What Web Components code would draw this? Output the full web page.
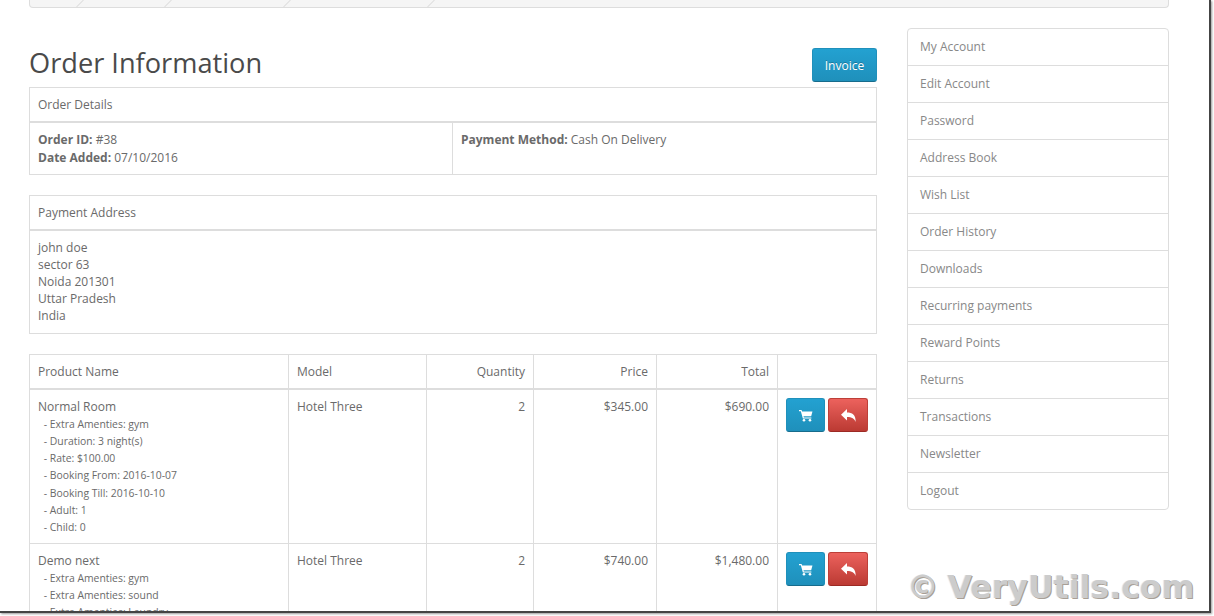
<!DOCTYPE html>
<html>
<head>
<meta charset="utf-8">
<title>Order Information</title>
<style>
html, body { margin: 0; background: #fff; }
body { font-family: "Open Sans", "Liberation Sans", sans-serif; font-size: 12px; color: #6a6a6a; }
</style>
</head>
<body>
<page-frame>
  <crumb-bar></crumb-bar>
  <div slot="main">
    <order-title>Order Information<action-button slot="action">Invoice</action-button></order-title>
    <info-panel heading="Order Details" columns="2">
      <div><b>Order ID:</b> #38<br><b>Date Added:</b> 07/10/2016</div>
      <div class="next"><b>Payment Method:</b> Cash On Delivery</div>
    </info-panel>
    <info-panel heading="Payment Address">
      <div>john doe<br>sector 63<br>Noida 201301<br>Uttar Pradesh<br>India</div>
    </info-panel>
    <order-table></order-table>
  </div>
  <account-menu slot="side"></account-menu>
  <water-mark slot="overlay">© VeryUtils.com</water-mark>
</page-frame>

<script>
class PageFrame extends HTMLElement {
  constructor() {
    super();
    this.attachShadow({ mode: 'open' }).innerHTML = `
<style>
:host { display: block; width: 1214px; height: 616px; overflow: hidden; position: relative; background: #fff; }
.screen { width: 1209px; height: 611px; overflow: hidden; position: relative; box-sizing: content-box;
  border-right: 2px solid #444; border-bottom: 2px solid #444; box-shadow: 1px 1px 2px #999; background: #fff; }
.wrap { width: 1140px; margin-left: 29px; }
.cols { display: flex; justify-content: space-between; padding-top: 20px; }
.main { width: 848px; }
.side { width: 262px; }
</style>
<div class="screen">
  <div class="wrap">
    <slot></slot>
    <div class="cols">
      <div class="main"><slot name="main"></slot></div>
      <div class="side"><slot name="side"></slot></div>
    </div>
  </div>
  <slot name="overlay"></slot>
</div>`;
  }
}

class CrumbBar extends HTMLElement {
  constructor() {
    super();
    this.attachShadow({ mode: 'open' }).innerHTML = `
<style>
:host { display: block; height: 8px; box-sizing: border-box; overflow: hidden; background: #f5f5f5;
  border: 1px solid #ddd; border-top: 0; border-radius: 0 0 4px 4px; }
.row { display: flex; height: 7px; }
i { display: block; height: 7px; position: relative; overflow: hidden; flex: none; }
i::after { content: ""; position: absolute; right: -1px; top: 3px; width: 10px; height: 1px; background: #ddd;
  transform: rotate(-45deg); transform-origin: center; }
</style>
<div class="row"><i style="width:54px"></i><i style="width:88px"></i><i style="width:119px"></i><i style="width:144px"></i></div>`;
  }
}

class OrderTitle extends HTMLElement {
  constructor() {
    super();
    this.attachShadow({ mode: 'open' }).innerHTML = `
<style>
:host { display: flex; justify-content: space-between; align-items: flex-end; height: 59px;
  font-size: 27.2px; line-height: 33px; color: #4a4a4a; }
.t { padding-bottom: 8px; }
.a { padding-bottom: 5px; }
</style>
<span class="t"><slot></slot></span><span class="a"><slot name="action"></slot></span>`;
  }
}

class ActionButton extends HTMLElement {
  constructor() {
    super();
    this.attachShadow({ mode: 'open' }).innerHTML = `
<style>
:host { display: inline-flex; align-items: center; justify-content: center; box-sizing: border-box;
  width: var(--w, 65px); height: 34px; padding-top: 1px; border-radius: 3px; font-size: 12px; line-height: 20px; color: #fff;
  background: linear-gradient(to bottom, #23a1d1, #1f90bb); border: 1px solid #1f90bb; border-bottom-color: #176c8c;
  text-shadow: 0 -1px 0 rgba(0,0,0,.25); }
:host([tone="red"]) { background: linear-gradient(to bottom, #ec625d, #bb3a33); border-color: #bd3f38; border-bottom-color: #9c2a24; }
</style>
<slot></slot>`;
  }
}

class InfoPanel extends HTMLElement {
  constructor() {
    super();
    this.attachShadow({ mode: 'open' }).innerHTML = `
<style>
:host { display: block; border: 1px solid #ddd; margin-bottom: 20px; }
.head { padding: 8px 8px 7px; height: 18px; line-height: 18px; border-bottom: 2px solid #ddd; }
.body { display: grid; }
:host([columns="2"]) .body { grid-template-columns: 422px 1fr; }
::slotted(div) { padding: 8px 8px 9px; line-height: 17px; }
:host([columns="2"]) ::slotted(div) { padding: 8px 8px 7px; line-height: 18px; }
::slotted(.next) { border-left: 1px solid #ddd; }
</style>
<div class="head"></div>
<div class="body"><slot></slot></div>`;
  }
  connectedCallback() {
    this.shadowRoot.querySelector('.head').textContent = this.getAttribute('heading');
  }
}

const cartIcon = `<svg width="14" height="13" viewBox="0 0 13 12" fill="#fff"><path d="M0 1h2.4l.4 1.2H12.5l-1.2 4.6H4.2l.3 1.1h7v1H3.6L1.7 2H0z"/><circle cx="4.6" cy="10.4" r="1.2"/><circle cx="10.2" cy="10.4" r="1.2"/></svg>`;
const replyIcon = `<svg width="15" height="13" viewBox="0 0 15 13" fill="#fff"><path d="M6 0v3.4C11 3.4 15 5.5 14.6 13 13.4 9.5 11 8 6 8v3.4L0 5.7z"/></svg>`;

class OrderTable extends HTMLElement {
  constructor() {
    super();
    const rows = [
      { name: 'Normal Room', price: '$345.00', total: '$690.00', opts: ['Extra Amenties: gym', 'Duration: 3 night(s)', 'Rate: $100.00', 'Booking From: 2016-10-07', 'Booking Till: 2016-10-10', 'Adult: 1', 'Child: 0'] },
      { name: 'Demo next', price: '$740.00', total: '$1,480.00', opts: ['Extra Amenties: gym', 'Extra Amenties: sound', 'Extra Amenties: Laundry'] }
    ];
    const body = rows.map(r => `
<tr>
  <td>${r.name}${r.opts.map(o => `<div class="opt">&nbsp;- ${o}</div>`).join('')}</td>
  <td>Hotel Three</td>
  <td class="r">2</td>
  <td class="r">${r.price}</td>
  <td class="r">${r.total}</td>
  <td><div class="wrap"><action-button style="--w:39px">${cartIcon}</action-button><action-button tone="red" style="--w:40px">${replyIcon}</action-button></div></td>
</tr>`).join('');
    this.attachShadow({ mode: 'open' }).innerHTML = `
<style>
:host { display: block; }
table { border-collapse: collapse; table-layout: fixed; width: 847px; }
th, td { border: 1px solid #ddd; padding: 8px; text-align: left; vertical-align: top; font-weight: normal; line-height: 18px; }
td { padding-bottom: 7px; }
th { height: 18px; padding-bottom: 7px; border-bottom-width: 2px; }
.r { text-align: right; }
.opt { font-size: 10.4px; line-height: 17.14px; padding-left: 3px; }
.wrap { display: flex; gap: 3px; }
</style>
<table>
  <colgroup><col style="width:259px"><col style="width:138px"><col style="width:107px"><col style="width:123px"><col style="width:121px"><col style="width:99px"></colgroup>
  <thead><tr><th>Product Name</th><th>Model</th><th class="r">Quantity</th><th class="r">Price</th><th class="r">Total</th><th></th></tr></thead>
  <tbody>${body}</tbody>
</table>`;
  }
}

class AccountMenu extends HTMLElement {
  constructor() {
    super();
    const items = ['My Account', 'Edit Account', 'Password', 'Address Book', 'Wish List', 'Order History', 'Downloads', 'Recurring payments', 'Reward Points', 'Returns', 'Transactions', 'Newsletter', 'Logout'];
    this.attachShadow({ mode: 'open' }).innerHTML = `
<style>
:host { display: block; border: 1px solid #ddd; border-radius: 4px; overflow: hidden; color: #888; }
a { display: block; padding: 9px 12px; height: 18px; line-height: 18px; border-top: 1px solid #ddd; }
a:first-of-type { border-top: 0; }
</style>
${items.map(t => `<a>${t}</a>`).join('')}`;
  }
}

class WaterMark extends HTMLElement {
  constructor() {
    super();
    this.attachShadow({ mode: 'open' }).innerHTML = `
<style>
:host { position: absolute; left: 907px; top: 569px; font-family: "DejaVu Sans", sans-serif; font-weight: bold;
  font-size: 31.6px; line-height: 36px; word-spacing: -2px; color: #ccc; white-space: nowrap; text-shadow: 1px 1px 0 #a89f96, -1px 0 0 #e4eaf2; }
</style>
<slot></slot>`;
  }
}

customElements.define('page-frame', PageFrame);
customElements.define('crumb-bar', CrumbBar);
customElements.define('order-title', OrderTitle);
customElements.define('action-button', ActionButton);
customElements.define('info-panel', InfoPanel);
customElements.define('order-table', OrderTable);
customElements.define('account-menu', AccountMenu);
customElements.define('water-mark', WaterMark);
</script>
</body>
</html>
